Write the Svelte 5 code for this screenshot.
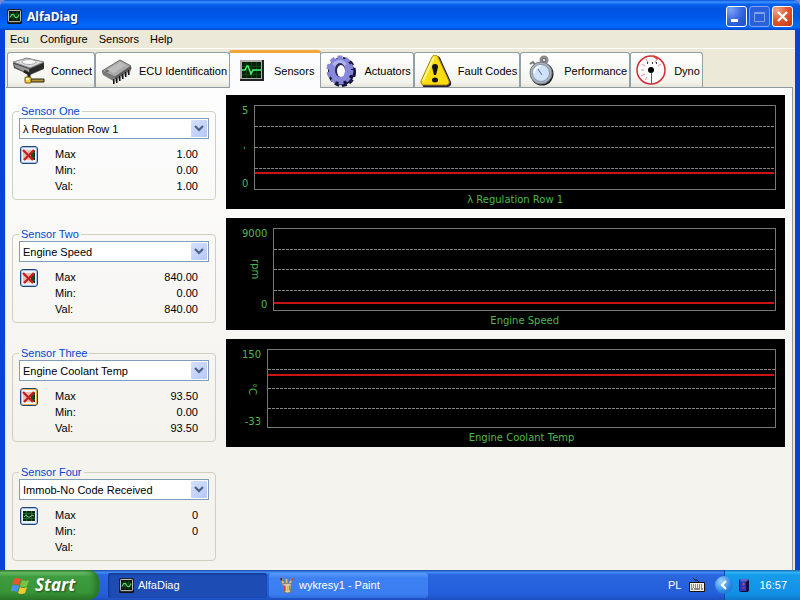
<script lang="ts">
  interface Sensor {
    id: string;
    title: string;
    channel: string;
    max: string;
    min: string;
    val: string;
    plotted: boolean;
    hot?: boolean;
  }

  interface Chart {
    title: string;
    unit: string;
    low: number;
    high: number;
    value: number;
  }

  const menus = ['Ecu', 'Configure', 'Sensors', 'Help'];

  const tabs = [
    { id: 'connect', label: 'Connect' },
    { id: 'ecu', label: 'ECU Identification' },
    { id: 'sensors', label: 'Sensors' },
    { id: 'actuators', label: 'Actuators' },
    { id: 'faults', label: 'Fault Codes' },
    { id: 'performance', label: 'Performance' },
    { id: 'dyno', label: 'Dyno' },
  ];

  const channels = ['λ Regulation Row 1', 'Engine Speed', 'Engine Coolant Temp', 'Immob-No Code Received'];

  let sensors: Sensor[] = $state([
    { id: 's1', title: 'Sensor One', channel: channels[0], max: '1.00', min: '0.00', val: '1.00', plotted: true },
    { id: 's2', title: 'Sensor Two', channel: channels[1], max: '840.00', min: '0.00', val: '840.00', plotted: true },
    { id: 's3', title: 'Sensor Three', channel: channels[2], max: '93.50', min: '0.00', val: '93.50', plotted: true, hot: true },
    { id: 's4', title: 'Sensor Four', channel: channels[3], max: '0', min: '0', val: '', plotted: false },
  ]);

  const charts: Chart[] = [
    { title: 'λ Regulation Row 1', unit: '-', low: 0, high: 5, value: 1 },
    { title: 'Engine Speed', unit: 'rpm', low: 0, high: 9000, value: 840 },
    { title: 'Engine Coolant Temp', unit: '°C', low: -33, high: 150, value: 93.5 },
  ];

  let active = $state('sensors');

  function level(c: Chart) {
    return ((c.value - c.low) / (c.high - c.low)) * 100;
  }
</script>

{#snippet scope()}
  <svg class="scope" viewBox="0 0 16 16" aria-hidden="true">
    <rect x="0" y="0" width="16" height="16" rx="2" fill="#111" />
    <rect x="1.5" y="1.5" width="13" height="12" rx="1" fill="#0a1a0c" stroke="#d8dcd8" />
    <path d="M3 5.500h10M3 8.500h10M6.500 3v9M10.500 3v9" stroke="#145a20" />
    <path d="M3 9l2-3 2 0 2 3 2 0 2-3" fill="none" stroke="#5fd06a" stroke-width="1.2" />
  </svg>
{/snippet}

{#snippet tabIcon(id: string)}
  <svg class="tab__icon" viewBox="0 0 32 32" aria-hidden="true">
    {#if id === 'connect'}
      <path d="M0 8 14 3l17 4v7l-14 6L1 13z" fill="#444" />
      <path d="M0 7 14 3l17 4-14 6z" fill="#dcdce0" stroke="#888" />
      <path d="M1 9l15 5v5L2 12z" fill="#999" />
      <path d="M17 14l14-6v5l-14 6z" fill="#2a2a2a" />
      <ellipse cx="16" cy="7" rx="7" ry="2.500" fill="#f8f8f8" stroke="#aaa" />
      <path d="M11 16l5 3v6" fill="none" stroke="#222" stroke-width="3" />
      <path d="M18 24h13v3H18z" fill="#b5952e" stroke="#222" />
      <rect x="12" y="22" width="6" height="6" rx="1" fill="#f3cf4a" stroke="#6d5310" />
      <path d="M13 23h3v2h-3z" fill="#fff4b8" />
    {:else if id === 'ecu'}
      <path d="M1 18 19 6l12 7-17 13z" fill="#333" />
      <path d="M1 16 19 5l11 6-16 11z" fill="#a9a9a9" stroke="#666" />
      <path d="M6 15 19 7l6 3-12 8z" fill="#bdbdbd" />
      <path d="M1 16l13 6v5L2 20z" fill="#7c7c7c" />
      <path d="M14 22l16-11v5L14 27z" fill="#5a5a5a" />
      <path d="M13 24v5M16 23v5M19 21v5M22 19v5M25 17v5M28 15v5" stroke="#111" stroke-width="2" />
      <path d="M14 24v5M17 23v5M20 21v5M23 19v5M26 17v5M29 15v5" stroke="#ddd" />
      <ellipse cx="6" cy="16" rx="2" ry="1" fill="#666" />
    {:else if id === 'sensors'}
      <rect x="4" y="5" width="24" height="21" fill="#222" />
      <rect x="4" y="5" width="22" height="19" fill="#aaa" />
      <rect x="6" y="7" width="19" height="16" fill="#020" />
      <path d="M6 11.500h19M6 15.500h19M6 19.500h19M10.500 7v16M15.500 7v16M20.500 7v16" stroke="#10401a" />
      <path d="M6 15h3l2-4 1 0 3 8 2-4h8" fill="none" stroke="#4bf368" stroke-width="1.500" />
    {:else if id === 'actuators'}
      <g fill="#11113a" stroke="#11113a">
        <ellipse cx="16" cy="17" rx="12" ry="13" />
        <ellipse cx="16" cy="17" rx="13" ry="14" fill="none" stroke-width="2" stroke-dasharray="5 3" />
      </g>
      <ellipse cx="14" cy="15" rx="12" ry="13" fill="none" stroke="#8585d6" stroke-width="3" stroke-dasharray="5 3" />
      <ellipse cx="14" cy="15" rx="11" ry="12" fill="#8888da" />
      <path d="M6 9q8-8 15 0l-3 2q-4-3-8 1z" fill="#b2b2f2" />
      <ellipse cx="14" cy="15" rx="5" ry="7" fill="#25254f" />
      <ellipse cx="15" cy="16" rx="4" ry="6" fill="#fff" />
    {:else if id === 'faults'}
      <path d="M17 1q3 0 4 4l10 22q1 4-3 5H4q-2 0-1-3z" fill="#241a44" />
      <path d="M15 0q2 0 3 2l11 24q1 3-2 4H3q-3-1-2-4L12 2q1-2 3-2z" fill="#fbdc10" stroke="#a88708" />
      <path d="M14 2 3 26" stroke="#fff48a" stroke-width="2" />
      <path d="M15 9q3 0 3 3l-2 8h-2l-2-8q0-3 3-3z" fill="#111" />
      <ellipse cx="15" cy="25" rx="3" ry="2.500" fill="#111" />
    {:else if id === 'performance'}
      <circle cx="18" cy="5" r="3.500" fill="none" stroke="#888" stroke-width="2" />
      <circle cx="18" cy="5" r="2" fill="#ddd" stroke="#444" />
      <path d="M4 9l3-2 3 4" fill="none" stroke="#777" stroke-width="2" />
      <circle cx="16" cy="19" r="11.500" fill="#222" />
      <circle cx="15" cy="18" r="11" fill="#aab1bd" stroke="#727983" />
      <circle cx="15" cy="18" r="8.500" fill="#cfe2fa" stroke="#8697ad" />
      <path d="M12 14l4 6" stroke="#536b91" />
      <path d="M8 18a7 7 0 0 1 7-7" fill="none" stroke="#f5faff" stroke-width="2" />
    {:else}
      <circle cx="15" cy="15" r="14" fill="#fff" stroke="#d12b36" stroke-width="1.500" />
      <path d="M5 15h3M6 9l3 2M10 4l2 4M5 21l4-2M9 25l2-3M21 4l-2 4M25 9l-3 2" stroke="#e48a90" />
      <path d="M11 8h1M16 8h1M20 8h1" stroke="#345" stroke-width="2" />
      <path d="M15.500 17v12" stroke="#c33" />
      <path d="M17 1l5 3" stroke="#d43" stroke-width="2" />
      <circle cx="15" cy="15" r="3" fill="#000" />
    {/if}
  </svg>
{/snippet}

<div class="desktop">
  <div class="window">
    <header class="titlebar">
      {@render scope()}
      <h1>AlfaDiag</h1>
      <div class="titlebar__buttons">
        <button class="winbtn" aria-label="Minimize">
          <svg viewBox="0 0 19 19"><rect x="4" y="12" width="7" height="3" fill="#fff" /></svg>
        </button>
        <button class="winbtn winbtn--dim" aria-label="Maximize" disabled>
          <svg viewBox="0 0 19 19"><path d="M4.500 5.500h10v9h-10zM4 6.500h11" fill="none" stroke="#7fa3ee" /></svg>
        </button>
        <button class="winbtn winbtn--close" aria-label="Close">
          <svg viewBox="0 0 19 19"><path d="M5 5l9 9M14 5l-9 9" stroke="#fff" stroke-width="2.400" /></svg>
        </button>
      </div>
    </header>

    <div class="client">
      <nav class="menubar">
        {#each menus as m (m)}
          <button>{m}</button>
        {/each}
      </nav>

      <div class="tabs" role="tablist">
        {#each tabs as tab (tab.id)}
          <button
            class="tab"
            class:tab--active={active === tab.id}
            role="tab"
            aria-selected={active === tab.id}
            onclick={() => (active = tab.id)}
          >
            {@render tabIcon(tab.id)}
            <span>{tab.label}</span>
          </button>
        {/each}
      </div>

      <main class="pane">
        <div class="sensors">
          {#each sensors as s (s.id)}
            <fieldset class="sensor">
              <legend><label for={s.id}>{s.title}</label></legend>
              <div class="combo">
                <select id={s.id} bind:value={s.channel}>
                  {#each channels as c (c)}
                    <option value={c}>{c}</option>
                  {/each}
                </select>
                <svg class="combo__arrow" viewBox="0 0 16 17" aria-hidden="true">
                  <path d="M4 6l4 4 4-4" fill="none" stroke="#4d6185" stroke-width="2.200" />
                </svg>
              </div>
              <div class="readout">
                <button
                  class="plot-toggle"
                  class:plot-toggle--hot={s.hot}
                  aria-label="Toggle chart"
                  onclick={() => (s.plotted = !s.plotted)}
                >
                  <svg viewBox="0 0 14 14" aria-hidden="true">
                    <rect x="1" y="2" width="12" height="10" fill="#0b2a10" />
                    <path d="M1 4.500h12M1 9.500h12M4.500 2v10M9.500 2v10" stroke="#1c6b2a" />
                    <path d="M2 8l2-2 2 2 2 0 2-2 2 1" fill="none" stroke="#6fd07a" />
                    {#if s.plotted}
                      <path d="M1 2h12L8 7l4 5H1z" fill="#e8c0b0" />
                      <path d="M9 5l3-2v8l-3-2z" fill="#1c4a22" />
                      <path d="M1 2l10 10M12 2L2 12" stroke="#c81e1e" stroke-width="2.400" />
                    {/if}
                  </svg>
                </button>
                <table>
                  <tbody>
                    <tr><th scope="row">Max</th><td>{s.max}</td></tr>
                    <tr><th scope="row">Min:</th><td>{s.min}</td></tr>
                    <tr><th scope="row">Val:</th><td>{s.val}</td></tr>
                  </tbody>
                </table>
              </div>
            </fieldset>
          {/each}
        </div>

        <div class="charts">
          {#each charts as c (c.title)}
            <figure class="chart">
              <div class="chart__axis">
                <span>{c.high}</span>
                <span class="chart__unit">{c.unit}</span>
                <span>{c.low}</span>
              </div>
              <div class="chart__plot">
                <i></i><i></i><i></i>
                <div class="chart__trace" style="bottom: {level(c)}%;"></div>
              </div>
              <figcaption>{c.title}</figcaption>
            </figure>
          {/each}
        </div>
      </main>
    </div>
  </div>

  <footer class="taskbar">
    <button class="start">
      <svg viewBox="0 0 20 20" aria-hidden="true">
        <path d="M3 4q3-2 7 0L8 10q-3-2-7 0z" fill="#e9552c" />
        <path d="M11 5q3 2 7 0l-2 6q-4 2-7 0z" fill="#7cc243" />
        <path d="M1 11q3-2 7 0l-2 6q-3-2-7 0z" fill="#4f8ff0" />
        <path d="M9 12q3 2 7 0l-2 6q-4 2-7 0z" fill="#fbc72e" />
      </svg>
      <span>Start</span>
    </button>
    <div class="tasks">
      <button class="task task--active">
        {@render scope()}
        <span>AlfaDiag</span>
      </button>
      <button class="task">
        <svg class="scope" viewBox="0 0 16 16" aria-hidden="true">
          <path d="M4 8L2 1M7 8V1M9 8l4-7" stroke="#e9c35a" stroke-width="1.800" />
          <path d="M2 3L1 0" stroke="#5a2d12" stroke-width="2" />
          <path d="M12 3l2-3" stroke="#d8402c" stroke-width="2" />
          <path d="M3 6h9l-1 9q-3 2-6 0z" fill="#d9d4c8" stroke="#8c7b58" />
          <path d="M5 8v6" stroke="#c8452c" stroke-width="2" />
          <path d="M8 8v6" stroke="#e8b93c" stroke-width="2" />
          <path d="M10 8v5" stroke="#4f9e4a" />
        </svg>
        <span>wykresy1 - Paint</span>
      </button>
    </div>
    <div class="lang">
      <span>PL</span>
      <svg viewBox="0 0 16 14" aria-hidden="true">
        <path d="M4 0l2 2 2 0 2 2" fill="none" stroke="#112" />
        <rect x="0" y="4" width="16" height="10" rx="1" fill="#111" />
        <rect x="1" y="5" width="14" height="8" fill="#f2efe2" />
        <path d="M2 7h12M2 9h12" stroke="#222" stroke-dasharray="1 1" />
        <path d="M2 11h2M5 11h6M12 11h2" stroke="#222" />
      </svg>
    </div>
    <div class="tray">
      <button class="tray__more" aria-label="Show hidden icons">
        <svg viewBox="0 0 18 18"><path d="M11 5L7 9l4 4" fill="none" stroke="#fff" stroke-width="2.200" /></svg>
      </button>
      <svg class="tray__battery" viewBox="0 0 10 14" aria-hidden="true">
        <rect x="0" y="1" width="10" height="13" rx="2" fill="#0a0e4a" />
        <rect x="1" y="2" width="6" height="11" fill="#2c35b8" />
        <ellipse cx="5" cy="2" rx="4" ry="1.500" fill="#5c68c8" />
        <path d="M3 6h3M4.500 4.500v3" stroke="#e04434" />
        <path d="M3 10h3" stroke="#c03a6a" />
      </svg>
      <time>16:57</time>
    </div>
  </footer>
</div>

<style>
  :global(body) {
    margin: 0;
    background: #7b86cf;
  }

  .desktop {
    display: flex;
    flex-direction: column;
    min-height: 100vh;
    font-family: "Liberation Sans", Arial, sans-serif;
    font-size: 11px;
    color: #000;
  }

  button,
  select {
    font: inherit;
    color: inherit;
    margin: 0;
    padding: 0;
    border: 0;
    background: none;
  }

  svg {
    display: block;
    flex: none;
  }

  .scope {
    width: 15px;
    height: 15px;
  }

  .window {
    flex: 1;
    display: flex;
    flex-direction: column;
    border-radius: 8px 8px 0 0;
    overflow: hidden;
    background: #0842d8;
  }

  .titlebar {
    display: flex;
    align-items: center;
    gap: 5px;
    height: 30px;
    padding: 3px 7px 0 7px;
    box-sizing: border-box;
    background: linear-gradient(#0a50d8 0, #3d95ff 7%, #0a62ee 14%, #0054e0 28%, #0057e6 55%, #0066fb 80%, #0068ff 90%, #0046c8 100%);
  }

  .titlebar h1 {
    flex: 1;
    margin: 0;
    font-family: "Noto Sans", sans-serif;
    font-size: 12px;
    font-weight: 700;
    line-height: 16px;
    color: #fff;
    text-shadow: 1px 1px 1px #0b2a80;
  }

  .titlebar__buttons {
    display: flex;
    gap: 2px;
  }

  .winbtn {
    width: 21px;
    height: 21px;
    border: 1px solid #fff;
    border-radius: 3px;
    background: radial-gradient(circle at 20% 15%, #7fa4f4, #3567e0 50%, #1d4bcb);
  }

  .winbtn--dim {
    border-color: #7fa3ee;
    background: #2b5fdc;
  }

  .winbtn--close {
    border-color: #fff;
    background: radial-gradient(circle at 20% 15%, #f0a58c, #e2532c 50%, #c43c15);
  }

  .client {
    flex: 1;
    display: flex;
    flex-direction: column;
    margin: 0 5px;
    background: #ece9d8;
  }

  .menubar {
    display: flex;
    gap: 11px;
    height: 18px;
    padding: 0 5px;
    border-bottom: 1px solid #fff;
  }

  .tabs {
    display: flex;
    align-items: flex-end;
    height: 38px;
    padding: 0 2px;
  }

  .tab {
    display: flex;
    align-items: center;
    gap: 6px;
    height: 35px;
    padding: 1px 2px 0 5px;
    border: 1px solid #91a0a6;
    border-bottom: 0;
    border-radius: 3px 3px 0 0;
    background: linear-gradient(#fff, #f4f4ee 85%, #e6e4da);
    white-space: nowrap;
  }

  .tab--active {
    position: relative;
    z-index: 1;
    height: 38px;
    margin: 0 -1px -1px;
    padding: 0 6px;
    border-top: 3px solid #f2a637;
    background: #fcfcfe;
  }

  .tab__icon {
    width: 32px;
    height: 32px;
  }

  .pane {
    flex: 1;
    display: flex;
    gap: 10px;
    margin: 0 2px 0 1px;
    padding: 7px 7px 10px 6px;
    border: 1px solid #919b9c;
    border-left: 0;
    border-bottom: 0;
    background: linear-gradient(#fdfdfe, #f4f3ee 70%);
  }

  .sensors {
    flex: none;
    display: grid;
    grid-template-rows: 123px;
    grid-auto-rows: 119px;
    align-content: start;
    width: 204px;
    padding-top: 9px;
    margin-bottom: -30px;
  }

  .sensor {
    align-self: start;
    min-width: 0;
    height: 96px;
    box-sizing: border-box;
    margin: 0;
    padding: 0 6px;
    border: 1px solid #d0d0bf;
    border-radius: 4px;
  }

  .sensor legend {
    padding: 0 2px;
    line-height: 14px;
    color: #0046d5;
  }

  .combo {
    display: grid;
    align-items: center;
  }

  .combo select,
  .combo__arrow {
    grid-area: 1 / 1;
  }

  .combo select {
    appearance: none;
    width: 100%;
    height: 21px;
    padding: 0 18px 0 3px;
    border: 1px solid #7f9db9;
    border-radius: 0;
    background: #fff;
  }

  .combo__arrow {
    justify-self: end;
    width: 16px;
    height: 17px;
    margin-right: 2px;
    border-radius: 1px;
    background: linear-gradient(135deg, #d5e0fd, #b4c8f6);
    pointer-events: none;
  }

  .readout {
    display: flex;
    align-items: flex-start;
    gap: 17px;
    padding: 7px 11px 0 1px;
  }

  .plot-toggle {
    width: 18px;
    height: 18px;
    padding: 1px;
    border: 1px solid #1d4574;
    border-radius: 3px;
    background: #eef2fa;
    box-shadow: inset 0 0 0 1px #a9c0ea;
  }

  .plot-toggle--hot {
    box-shadow: inset 0 0 0 1px #f0b040;
  }

  .readout table {
    flex: 1;
    border-collapse: collapse;
    line-height: 16px;
  }

  .readout th,
  .readout td {
    height: 16px;
    padding: 0;
  }

  .readout th {
    font-weight: 400;
    text-align: left;
  }

  .readout td {
    text-align: right;
  }

  .charts {
    flex: 1;
    display: grid;
    grid-template-rows: 114px 112px 108px;
    align-content: start;
    gap: 9px;
    min-width: 0;
  }

  .chart {
    display: grid;
    grid-template-columns: auto 1fr;
    grid-template-rows: 1fr 19px;
    column-gap: 6px;
    margin: 0;
    padding: 10px 9px 0 16px;
    background: #000;
    color: #4fb84f;
    font-family: "DejaVu Sans", Verdana, sans-serif;
    font-size: 10px;
    line-height: 12px;
  }

  .chart__axis {
    display: flex;
    flex-direction: column;
    justify-content: space-between;
    text-align: right;
  }

  .chart__unit {
    align-self: center;
    line-height: 6px;
    writing-mode: vertical-rl;
  }

  .chart__plot {
    position: relative;
    display: flex;
    flex-direction: column;
    justify-content: space-evenly;
    border: 1px solid #777;
  }

  .chart__plot i {
    height: 1px;
    background: repeating-linear-gradient(90deg, #858585 0 3px, #000 3px 4px);
  }

  .chart__trace {
    position: absolute;
    left: 0;
    right: 1px;
    height: 2px;
    margin-bottom: -2px;
    background: #c81414;
  }

  .chart figcaption {
    grid-column: 2;
    text-align: center;
    line-height: 19px;
  }

  .taskbar {
    display: flex;
    height: 30px;
    color: #fff;
    background: linear-gradient(#1f47a8 0, #3f8cf3 8%, #2a66df 16%, #245edb 80%, #1d4fc0 100%);
  }

  .start {
    display: flex;
    align-items: center;
    gap: 4px;
    width: 99px;
    padding: 0 0 0 11px;
    border-radius: 0 10px 10px 0;
    background: linear-gradient(#2f7d2f 0, #6cc06a 8%, #3f9c3f 22%, #379437 75%, #2a752a 100%);
    box-shadow: inset -4px 0 5px #2a752a;
  }

  .start svg {
    width: 20px;
    height: 20px;
  }

  .start span {
    font-family: "Noto Sans", sans-serif;
    font-size: 17px;
    font-style: italic;
    font-weight: 700;
    line-height: 20px;
    text-shadow: 1px 1px 2px #1c4d1c;
  }

  .tasks {
    flex: 1;
    display: flex;
    align-items: center;
    gap: 2px;
    min-width: 0;
    padding-left: 9px;
  }

  .task {
    display: flex;
    align-items: center;
    gap: 4px;
    width: 159px;
    height: 25px;
    padding-left: 11px;
    border-radius: 3px;
    background: linear-gradient(#5a9cfb, #3c81f3 20%, #3a7df0 85%, #2f6ddd);
  }

  .task--active {
    background: #1c4cb4;
    box-shadow: inset 1px 1px 2px #11358a;
  }

  .lang {
    display: flex;
    align-items: center;
    gap: 8px;
    padding-right: 19px;
  }

  .lang svg {
    width: 16px;
    height: 14px;
  }

  .tray {
    display: flex;
    align-items: center;
    padding-right: 13px;
    background: linear-gradient(#1464b8 0, #32b4f4 8%, #169ceb 16%, #1290e6 80%, #0f78cc 100%);
    box-shadow: inset 1px 0 #0c4a9c;
  }

  .tray__more {
    width: 18px;
    height: 18px;
    margin: 0 6px 0 -9px;
    border-radius: 50%;
    background: radial-gradient(circle at 35% 30%, #9fd4fb, #2f8ae8 55%, #1460c4);
  }

  .tray__battery {
    width: 10px;
    height: 14px;
    margin-right: 10px;
  }
</style>
